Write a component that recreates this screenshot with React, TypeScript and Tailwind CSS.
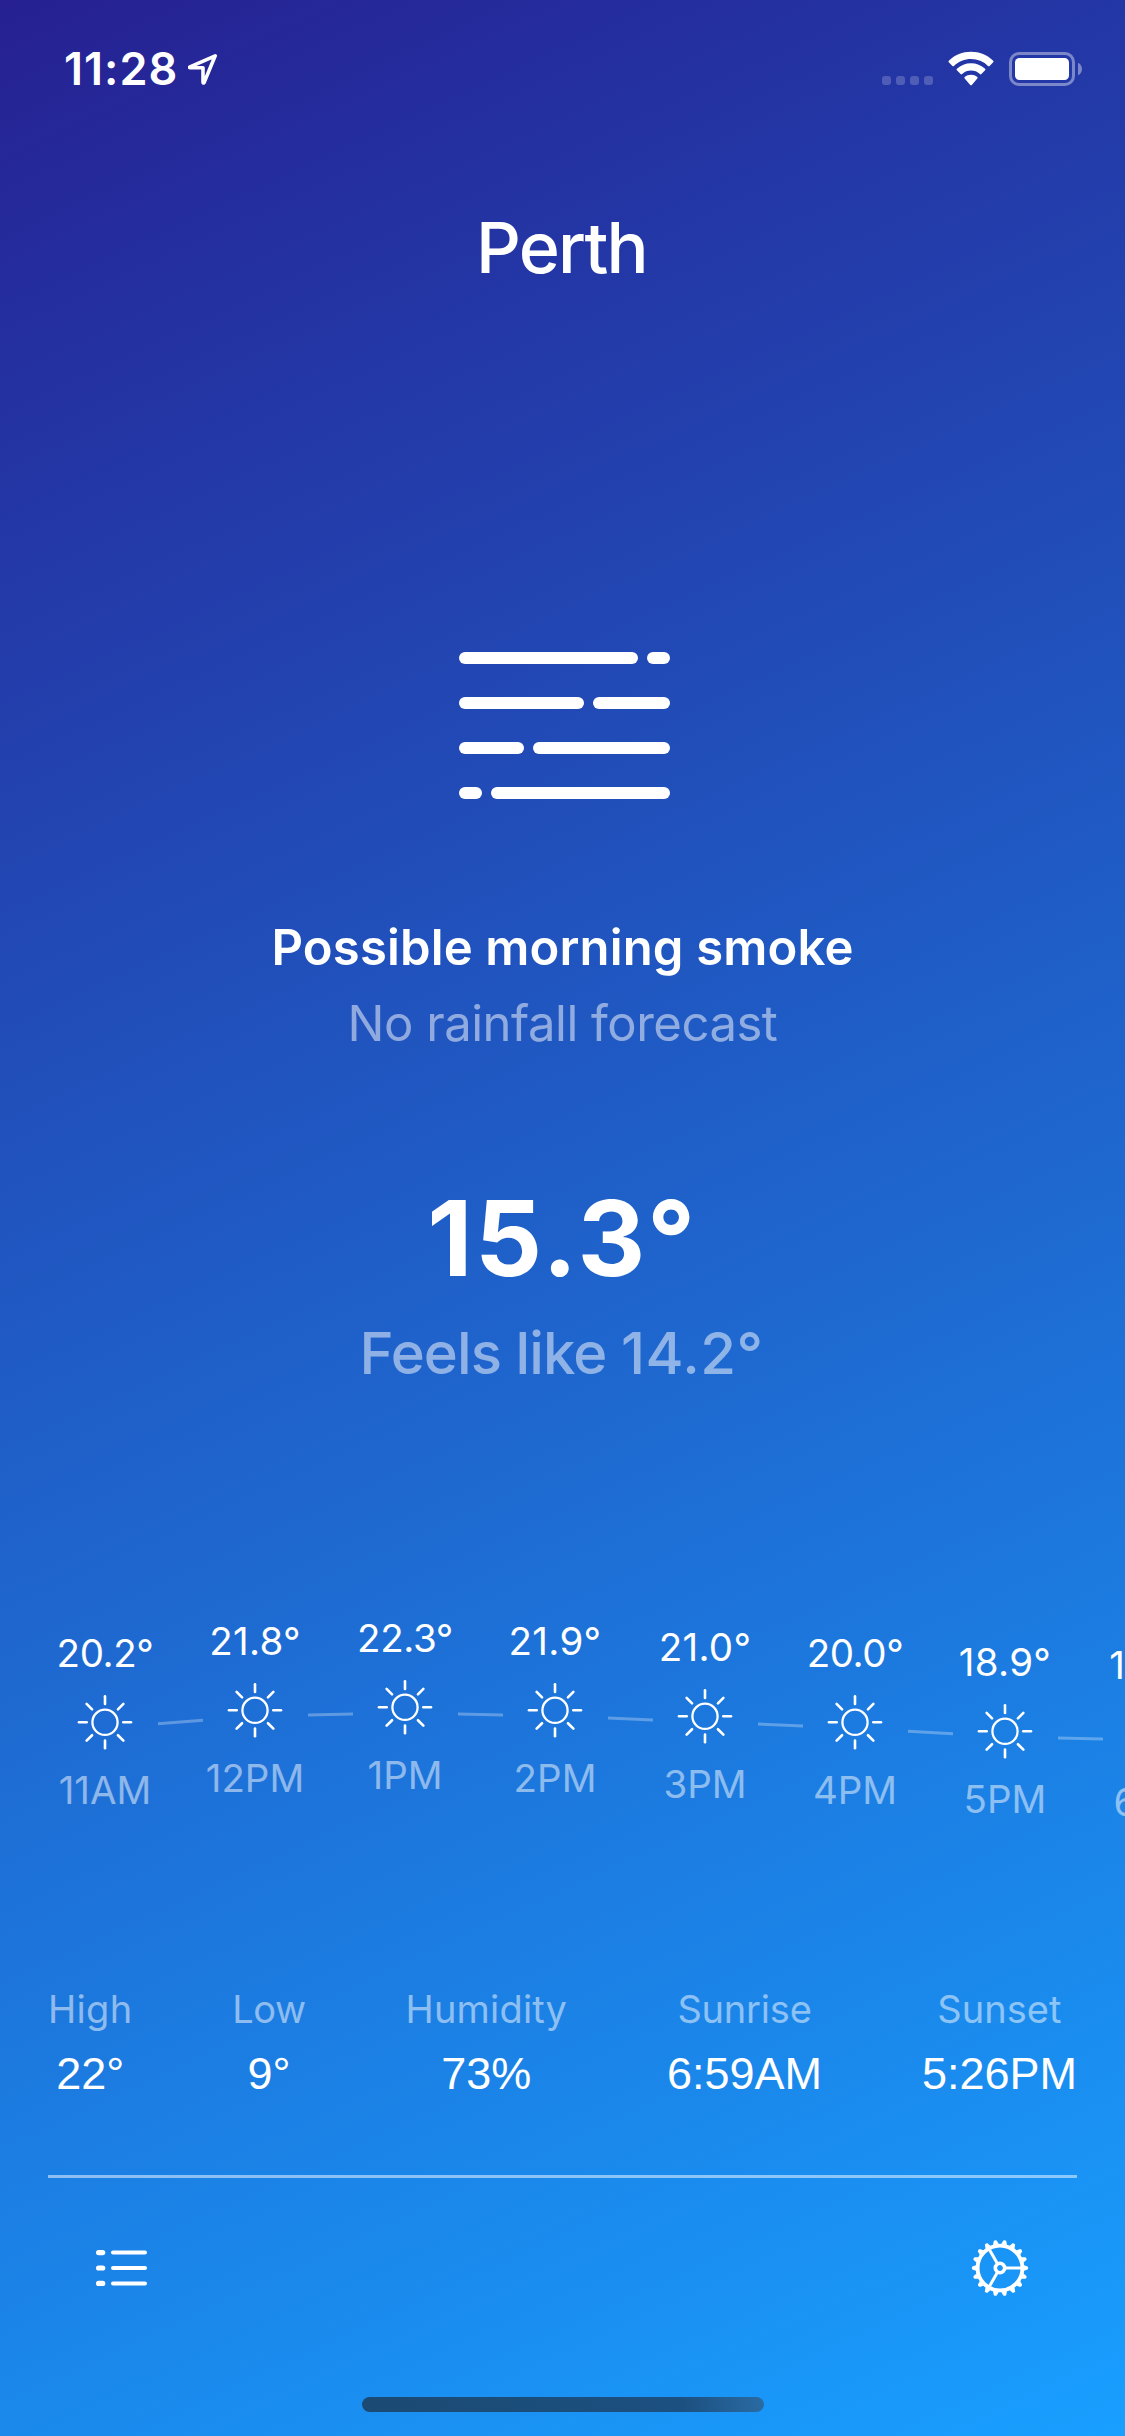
type Hour = { temp: string; label: string; offset: number };

const hours: Hour[] = [
  { temp: "20.2°", label: "11AM", offset: 15 },
  { temp: "21.8°", label: "12PM", offset: 3 },
  { temp: "22.3°", label: "1PM", offset: 0 },
  { temp: "21.9°", label: "2PM", offset: 3 },
  { temp: "21.0°", label: "3PM", offset: 9 },
  { temp: "20.0°", label: "4PM", offset: 15 },
  { temp: "18.9°", label: "5PM", offset: 24 },
  { temp: "18.5°", label: "6PM", offset: 27 },
];

const stats = [
  { name: "High", value: "22°", nameStyle: "tracking-[0.3px]" },
  { name: "Low", value: "9°", nameStyle: "tracking-[-0.4px]" },
  { name: "Humidity", value: "73%", nameStyle: "tracking-[0.17px]" },
  { name: "Sunrise", value: "6:59AM", nameStyle: "tracking-[-0.2px]" },
  { name: "Sunset", value: "5:26PM", nameStyle: "tracking-[0.06px]" },
];

function StatusBar() {
  return (
    <header className="flex h-[138px] items-start justify-between pl-[64px] pr-[43px]">
      <div className="flex items-start">
        <span className="mt-[39px] w-[124px] text-[45px] leading-[60px] font-semibold tracking-[1px]">
          11:28
        </span>
        <svg className="mt-[52px]" width="31" height="34" viewBox="0 0 31 34" fill="none">
          <path
            d="M27.2 3.8 2 14.8c-.8.4-.7.9.2.9H15v14.2c0 1.2.7 1.5 1.2.5Z"
            stroke="#fff"
            strokeWidth="3.6"
            strokeLinejoin="round"
          />
        </svg>
      </div>
      <div className="flex items-start">
        <div className="mt-[76px] flex gap-[5px]">
          {[0, 1, 2, 3].map((i) => (
            <span key={i} className="h-[9px] w-[9px] rounded-[3px] bg-white/20" />
          ))}
        </div>
        <svg className="mt-[51px] ml-[14px]" width="48" height="35" viewBox="0 0 48 35">
          <path
            fill="#fff"
            d="M24 .8c8.4 0 16.2 3.2 22.2 8.9.5.5.5 1.1 0 1.6l-3.6 3.6c-.5.5-1.1.5-1.6 0A24.6 24.6 0 0 0 24 8.100c-6.300 0-12.400 2.500-17 6.800-.5.5-1.100.5-1.600 0l-3.600-3.600c-.5-.5-.5-1.100 0-1.600C7.800 4 15.600.8 24 .8Z"
          />
          <path
            fill="#fff"
            d="M24 12.200c5.300 0 10.300 2 14.100 5.500.5.5.5 1.100 0 1.600l-3.700 3.700c-.5.5-1 .5-1.500 0a13.300 13.300 0 0 0-17.800 0c-.5.5-1 .5-1.500 0l-3.700-3.700c-.5-.5-.5-1.100 0-1.600 3.800-3.500 8.800-5.500 14.100-5.500Z"
          />
          <path
            fill="#fff"
            d="M24 23.700c2.400 0 4.600.8 6.300 2.200.5.5.5 1.100 0 1.600l-5.500 6.400c-.5.5-1.100.5-1.600 0l-5.500-6.400c-.5-.5-.5-1.100 0-1.600 1.700-1.400 3.900-2.200 6.300-2.200Z"
          />
        </svg>
        <svg className="mt-[52px] ml-[14px]" width="73" height="34" viewBox="0 0 73 34">
          <rect
            x="1.500"
            y="1.500"
            width="63"
            height="31"
            rx="8.500"
            fill="none"
            stroke="#fff"
            strokeOpacity="0.4"
            strokeWidth="3"
          />
          <rect x="6" y="6" width="54" height="22" rx="4.500" fill="#fff" />
          <path d="M69 10.800c2.500 1 4 3.500 4 6.200s-1.500 5.200-4 6.200Z" fill="#fff" fillOpacity="0.4" />
        </svg>
      </div>
    </header>
  );
}

function SmokeIcon() {
  const bar = "h-3 rounded-full bg-white";
  return (
    <div className="ml-[459px] flex h-[147px] w-[211px] flex-col justify-between">
      <div className="flex justify-between">
        <span className={`${bar} w-[179px]`} />
        <span className={`${bar} w-[23px]`} />
      </div>
      <div className="flex justify-between">
        <span className={`${bar} w-[125px]`} />
        <span className={`${bar} w-[77px]`} />
      </div>
      <div className="flex justify-between">
        <span className={`${bar} w-[65px]`} />
        <span className={`${bar} w-[137px]`} />
      </div>
      <div className="flex justify-between">
        <span className={`${bar} w-[23px]`} />
        <span className={`${bar} w-[179px]`} />
      </div>
    </div>
  );
}

function SunIcon() {
  return (
    <svg className="mt-4" width="60" height="60" viewBox="0 0 60 60" stroke="#fff" fill="none">
      <circle cx="30" cy="30.300" r="12.600" strokeWidth="2.300" />
      {[0, 45, 90, 135, 180, 225, 270, 315].map((a) => (
        <line
          key={a}
          x1="30"
          y1="4.300"
          x2="30"
          y2="12"
          strokeWidth="2.600"
          strokeLinecap="round"
          transform={`rotate(${a} 30 30.300)`}
        />
      ))}
    </svg>
  );
}

function HourlyForecast() {
  return (
    <section className="flex h-[371px] items-start overflow-hidden pl-[52px]">
      {hours.map((h, i) => {
        const next = hours[i + 1];
        const slope = next ? (next.offset - h.offset) * 0.3 : 0;
        const middle = next ? (next.offset + h.offset) / 2 + 98 : 0;
        const tracking = h.temp.includes("1") ? "tracking-[0.300px]" : "tracking-[-0.400px]";
        return (
          <div key={h.label} className="flex shrink-0 items-start">
            <div
              className="flex w-[106px] flex-col items-center"
              style={{ paddingTop: h.offset }}
            >
              <span className={`text-[38.500px] leading-[46px] ${tracking}`}>{h.temp}</span>
              <SunIcon />
              <span className="mt-[15px] text-[38.500px] leading-[46px] whitespace-nowrap text-white/50">
                {h.label}
              </span>
            </div>
            {next && (
              <svg width="44" height="160" viewBox="0 0 44 160" className="overflow-visible">
                <line
                  x1="0"
                  x2="45"
                  y1={middle - slope / 2}
                  y2={middle + slope / 2}
                  stroke="#fff"
                  strokeOpacity="0.29"
                  strokeWidth="3"
                />
              </svg>
            )}
          </div>
        );
      })}
    </section>
  );
}

function ListIcon() {
  return (
    <svg width="51" height="36" viewBox="0 0 51 36" fill="#fff">
      {[2.6, 18, 33.4].map((y) => (
        <g key={y}>
          <rect x="0" y={y - 2.6} width="9.300" height="5.200" rx="2.600" />
          <rect x="15" y={y - 2} width="36" height="4" rx="2" />
        </g>
      ))}
    </svg>
  );
}

function GearIcon() {
  const teeth = Array.from({ length: 18 }, (_, i) => i * 20);
  return (
    <svg width="58" height="58" viewBox="-29 -29 58 58" fill="none" stroke="#fff">
      <circle r="22.400" strokeWidth="3.800" />
      {teeth.map((a) => (
        <path
          key={a}
          d="M23.500 -3 27.600 -1.500Q28.900 0 27.600 1.500L23.500 3Z"
          fill="#fff"
          stroke="none"
          transform={`rotate(${a})`}
        />
      ))}
      {[0, 120, 240].map((a) => (
        <line key={a} x1="5" x2="21" y1="0" y2="0" strokeWidth="3" transform={`rotate(${a})`} />
      ))}
      <circle r="4.700" strokeWidth="3.600" />
    </svg>
  );
}

export default function App() {
  return (
    <div className="flex h-[2436px] w-[1125px] flex-col overflow-hidden bg-[linear-gradient(155.200deg,#262092_0%,#189fff_100%)] font-['Inter',sans-serif] text-white">
      <StatusBar />

      <h1 className="mt-[70px] h-[80px] pr-0.5 text-center text-[70px] leading-[80px] font-medium tracking-[-1.800px]">
        Perth
      </h1>

      <main className="mt-[364px] flex flex-col">
        <SmokeIcon />
        <p className="mt-[119px] text-center text-[49px] leading-[60px] font-semibold tracking-[0.150px]">
          Possible morning smoke
        </p>
        <p className="mt-4 text-center text-[49px] leading-[60px] tracking-[-0.480px] text-white/50">
          No rainfall forecast
        </p>
        <p className="mt-[124px] text-center text-[105px] leading-[120px] font-bold tracking-[2.500px]">
          15.3°
        </p>
        <p className="mt-5 pr-0.5 text-center text-[58px] leading-[70px] font-medium tracking-[-0.900px] text-white/50">
          Feels like <span className="tracking-[0.500px]">14.2°</span>
        </p>
      </main>

      <div className="mt-[227px]">
        <HourlyForecast />
      </div>

      <section className="mx-12 flex justify-between">
        {stats.map((s) => (
          <div key={s.name} className="flex flex-col items-center">
            <span className={`text-[38px] leading-[46px] text-white/50 ${s.nameStyle}`}>
              {s.name}
            </span>
            <span className="mt-[15px] font-['Liberation_Sans',sans-serif] text-[45px] leading-[54px]">
              {s.value}
            </span>
          </div>
        ))}
      </section>

      <footer className="mx-12 mt-[74px] flex flex-col border-t-[3px] border-white/50">
        <div className="flex h-[180px] items-center justify-between pr-[48px] pl-[48px]">
          <ListIcon />
          <GearIcon />
        </div>
      </footer>

      <div className="mt-[39px] ml-[362px] h-[15px] w-[402px] rounded-full bg-[linear-gradient(90deg,#1b4a73,#1c5080_80%,#2a6ba3)]" />
    </div>
  );
}
